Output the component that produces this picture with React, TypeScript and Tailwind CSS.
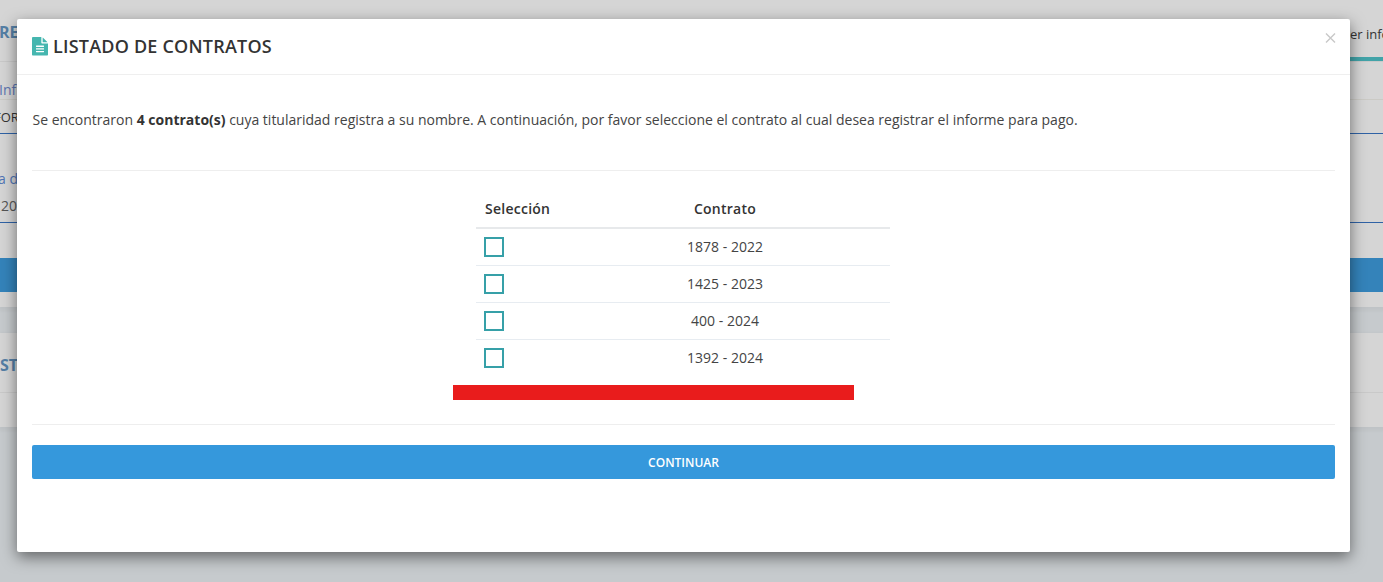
const contracts = ["1878 - 2022", "1425 - 2023", "400 - 2024", "1392 - 2024"];

function FileIcon() {
  return (
    <svg viewBox="128 0 1536 1792" className="mr-[5px] h-[18.5px] w-4 shrink-0 fill-[#45b6af]" preserveAspectRatio="none" aria-hidden="true">
      <path d="M1596 476q14 14 28 36h-472v-472q22 14 36 28zM1120 640h544v1056q0 40-28 68t-68 28h-1344q-40 0-68-28t-28-68v-1600q0-40 28-68t68-28h800v544q0 40 28 68t68 28zM1280 1440v-64q0-14-9-23t-23-9h-704q-14 0-23 9t-9 23v64q0 14 9 23t23 9h704q14 0 23-9t9-23zM1280 1184v-64q0-14-9-23t-23-9h-704q-14 0-23 9t-9 23v64q0 14 9 23t23 9h704q14 0 23-9t9-23zM1280 928v-64q0-14-9-23t-23-9h-704q-14 0-23 9t-9 23v64q0 14 9 23t23 9h704q14 0 23-9t9-23z" />
    </svg>
  );
}

function Backdrop() {
  return (
    <div className="flex h-full flex-col" aria-hidden="true">
      <section className="flex h-[307px] shrink-0 flex-col bg-[#d5d5d5] shadow-[0_2px_3px_2px_rgba(0,0,0,0.03)]">
        <div className="flex h-[62px] justify-between border-b border-[#c9c9c9]">
          <span className="-ml-px pt-[20px] text-[16px] leading-6 font-bold text-[#557fa5]">RE</span>
          <div className="h-[61px] w-[33px] overflow-hidden border-b-4 border-[#42a3a8] pt-[24px] text-[13px] leading-5 whitespace-nowrap text-[#333]">
            er info
          </div>
        </div>
        <div className="h-[38px] border-b border-[#cbcac5] pt-[18px] text-[14px] leading-5 text-[#5d74b0]">
          <span className="-ml-px">Inf</span>
        </div>
        <div className="h-[34px] border-b border-[#2f62a5] pt-[7px] text-[13px] leading-5 text-[#333]">
          <span className="-ml-[6px]">FOR</span>
        </div>
        <div className="h-[62px] pt-[35px] text-[14px] leading-5 text-[#5074b4]">
          <span className="-ml-[2px]">a d</span>
        </div>
        <div className="h-[27px] border-b border-[#2f62a5] text-[14px] leading-5 text-[#555]">
          <span className="ml-px">20</span>
        </div>
        <div className="mt-[35px] h-[34px] bg-[#3483ba]" />
      </section>
      <section className="mt-[26px] h-[94px] shrink-0 bg-[#d5d5d5] shadow-[0_2px_3px_2px_rgba(0,0,0,0.03)]">
        <div className="h-[60px] border-b border-[#c9c9c9] pt-[20px] text-[16px] leading-6 font-bold text-[#557fa5]">ST</div>
      </section>
    </div>
  );
}

export default function App() {
  return (
    <div className="relative h-[582px] w-full overflow-hidden bg-[#c6cacd] font-['Open_Sans',sans-serif] text-[14px] text-[#333]">
      <Backdrop />
      <div className="absolute inset-0 pt-[19px] pr-[33px] pl-[17px]" role="dialog" aria-modal="true">
        <div className="h-[533px] w-full rounded-[2px] bg-white shadow-[0_5px_15px_rgba(0,0,0,0.5)]">
          <header className="flex h-[56px] justify-between border-b border-[#efefef] px-[15px]">
            <h4 className="flex items-center text-[18px] leading-[27px] font-semibold tracking-[0.21px]">
              <FileIcon />
              LISTADO DE CONTRATOS
            </h4>
            <button type="button" aria-label="Cerrar" className="mt-[14px] -mr-px h-[10px] w-[11px]">
              <svg viewBox="0 0 11 10" className="h-[10px] w-[11px] stroke-[#c8c8c8]" strokeWidth="1.4">
                <path d="M1 .5l9 9M10 .5l-9 9" />
              </svg>
            </button>
          </header>
          <div className="px-[15px]">
            <p className="pt-[35px] pl-[0.5px] leading-5 text-[#444]">
              Se encontraron <b className="font-bold text-[#333]">4 contrato(s)</b> cuya titularidad registra a su nombre. A continuación, por favor seleccione el contrato al cual desea registrar el informe para pago.
            </p>
            <hr className="mt-[40px] border-[#eee]" />
            <div className="ml-[444px] w-[414px] pt-[19px]">
              <table className="w-full table-fixed border-collapse">
                <thead>
                  <tr className="h-[38px] border-b-2 border-[#e7e9eb]">
                    <th className="w-[84px] px-[9px] text-left font-semibold tracking-[0.25px]">Selección</th>
                    <th className="text-center font-semibold tracking-[0.25px]">Contrato</th>
                  </tr>
                </thead>
                <tbody className="text-[#444]">
                  {contracts.map((contract) => (
                    <tr key={contract} className="h-[37px] border-b border-[#e7ecf1] last:border-b-0">
                      <td className="pl-2">
                        <input type="checkbox" aria-label={contract} className="block size-5 appearance-none border-2 border-[#36a0a8]" />
                      </td>
                      <td className="text-center">{contract}</td>
                    </tr>
                  ))}
                </tbody>
              </table>
            </div>
            <div className="mt-[9px] ml-[421px] h-[15px] w-[401px] bg-[#e91c1c]" />
            <hr className="mt-[24px] border-[#eee]" />
            <button type="button" className="mt-[20px] flex h-[34px] w-full items-center justify-center rounded-[2px] bg-[#3598dc] pt-[2px] text-[12px] font-semibold text-white">
              CONTINUAR
            </button>
          </div>
        </div>
      </div>
    </div>
  );
}
